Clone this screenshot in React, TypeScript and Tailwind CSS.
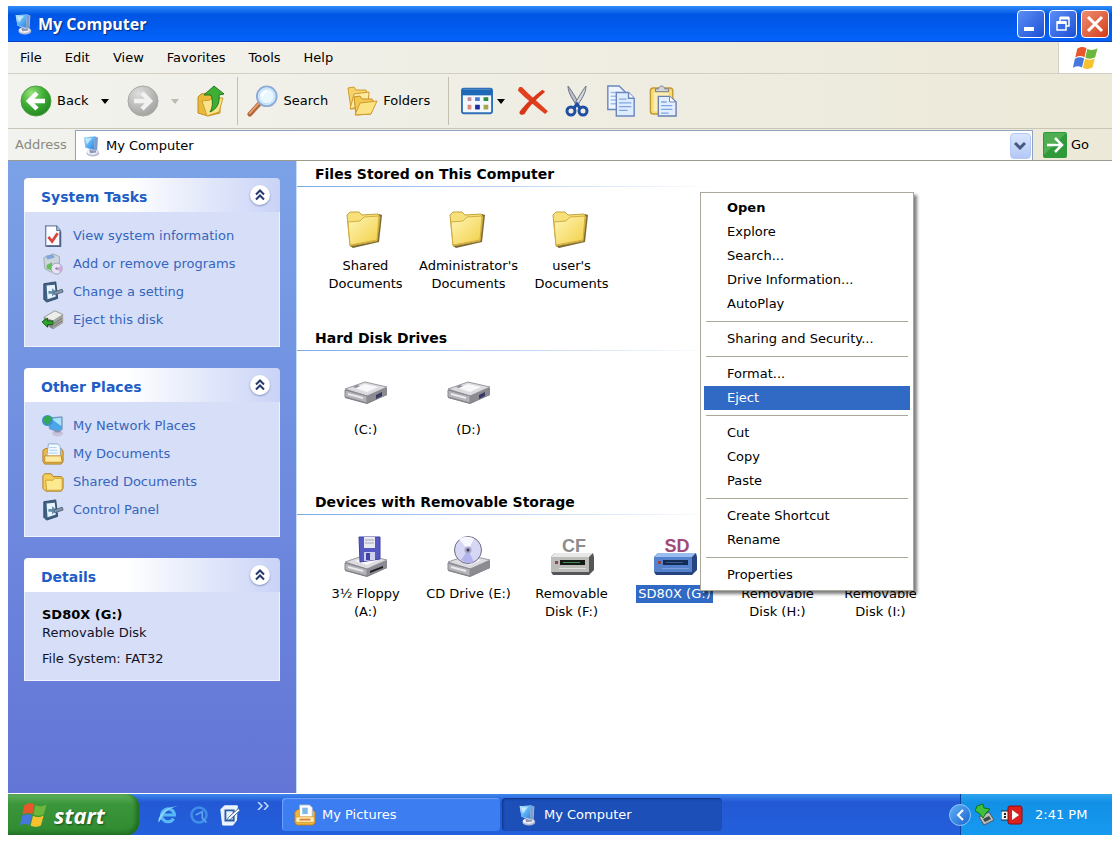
import React from "react";

const ComputerIcon: React.FC<{ className?: string }> = ({ className }) => (
  <svg viewBox="0 0 24 24" className={className} aria-hidden="true">
    <defs>
      <linearGradient id="screen" x1="0" y1="0" x2="1" y2="1">
        <stop offset="0" stopColor="#bfeaff" />
        <stop offset="0.5" stopColor="#5db4f4" />
        <stop offset="1" stopColor="#2c7fe0" />
      </linearGradient>
    </defs>
    <ellipse cx="14" cy="19.5" rx="7" ry="4" fill="#b9bcd0" />
    <ellipse cx="13.500" cy="18.500" rx="6" ry="3" fill="#edf0fa" />
    <path d="M10 15l7 1 1 3-7 1z" fill="#8f95b5" />
    <path d="M4 2.500L17 1.500 20 3 19 16.500 15 17.500 6 14z" fill="#cfd6ea" />
    <path d="M4 2.500L16.500 1.500 15 16 6 13.500z" fill="url(#screen)" />
    <path d="M16.500 1.500L19.500 3 18.500 16.500 15 17z" fill="#7f9cc9" />
    <path d="M6 4l7-.6-5.500 7z" fill="#e4f7ff" opacity="0.7" />
  </svg>
);

const WindowsFlag: React.FC<{ className?: string }> = ({ className }) => (
  <svg viewBox="0 0 28 26" className={className} aria-hidden="true">
    <path d="M4.500 3C8 .5 11.500.7 14.500 2.500l-2.200 9.700C9 10.400 6 10.500 2.400 12.500z" fill="#e8562a" />
    <path d="M15.500 3c3 1.800 7 1.800 11-.5l-2.600 9.800c-3.500 2-7.400 2-10.600.2z" fill="#6cb63b" />
    <path d="M2 13.700c3.300-2 6.700-2 10-.2l-2.400 9.700C6.500 21.500 3.500 21.500-.2 23.500z" fill="#4677dd" />
    <path d="M13 13.800c3.300 1.700 7 1.600 10.600-.3L21 23.300c-3.600 2.100-7.300 2-10.400.2z" fill="#f8c22e" />
  </svg>
);

const BackIcon = () => (
  <svg viewBox="0 0 32 32" className="size-8" aria-hidden="true">
    <defs>
      <radialGradient id="backBall" cx="0.35" cy="0.25" r="0.9">
        <stop offset="0" stopColor="#9be37c" />
        <stop offset="0.45" stopColor="#3fae35" />
        <stop offset="1" stopColor="#1c7a1c" />
      </radialGradient>
    </defs>
    <circle cx="16" cy="16" r="15" fill="url(#backBall)" stroke="#4f9f45" />
    <path d="M17 8l-8 8 8 8M10 16h15" fill="none" stroke="#fff" strokeWidth="4.500" />
  </svg>
);

const ForwardIcon = () => (
  <svg viewBox="0 0 32 32" className="size-8" aria-hidden="true">
    <defs>
      <radialGradient id="forwardBall" cx="0.35" cy="0.25" r="0.9">
        <stop offset="0" stopColor="#dedede" />
        <stop offset="0.6" stopColor="#b4b4b2" />
        <stop offset="1" stopColor="#9a9a98" />
      </radialGradient>
    </defs>
    <circle cx="16" cy="16" r="15" fill="url(#forwardBall)" stroke="#a8a8a5" />
    <path d="M15 8l8 8-8 8M22 16H7" fill="none" stroke="#f2f2f0" strokeWidth="4.500" />
  </svg>
);

const UpIcon = () => (
  <svg viewBox="0 0 28 32" className="h-8 w-7" aria-hidden="true">
    <path d="M1 12l3-3 6-1 2 2h8l3 3v15l-12 3-10-3z" fill="#e9b93c" stroke="#c08d1d" />
    <path d="M5 16l8-1 2-2h11l-4 14-12 4z" fill="#fbe38a" stroke="#cf9f2c" />
    <path d="M7 10L17 1l10 8-5 1c1 8-2 14-9 17 3-5 3-10 1-17z" fill="#3fae35" stroke="#1f7a1f" />
  </svg>
);

const SearchIcon = () => (
  <svg viewBox="0 0 34 34" className="size-8" aria-hidden="true">
    <path d="M3 31L13 20" stroke="#b0643a" strokeWidth="5" strokeLinecap="round" />
    <path d="M3 30L12 20" stroke="#e9a06a" strokeWidth="2" strokeLinecap="round" />
    <circle cx="21" cy="12" r="10.500" fill="#d5edfd" stroke="#8fa9d8" strokeWidth="2" />
    <circle cx="21" cy="12" r="8" fill="#e9f7ff" stroke="#b9dcf6" />
    <path d="M15 11c1-4 4-6 8-5-3 1-5 3-6 7z" fill="#fff" />
  </svg>
);

const FoldersIcon = () => (
  <svg viewBox="0 0 32 32" className="size-8" aria-hidden="true">
    <path d="M2 3l6-1 2 3h10l1 3v15l-16 1z" fill="#f7d467" stroke="#d09b30" />
    <path d="M4 24L8 9l15-2-1 12z" fill="#fdeb9f" stroke="#d09b30" />
    <path d="M8 12l6-1 2 3h10l2 3-3 12-15 1z" fill="#f3c851" stroke="#c98f27" />
    <path d="M9 30l5-12 17-2-6 13z" fill="#fbe283" stroke="#cf9a2d" />
  </svg>
);

const ViewsIcon = () => (
  <svg viewBox="0 0 34 28" className="h-7 w-8" aria-hidden="true">
    <rect x="1" y="1" width="32" height="26" rx="2" fill="#f3f8fe" stroke="#2f6fb5" strokeWidth="2" />
    <path d="M1 2h32v6H1z" fill="#1e68b8" />
    <path d="M7 10h4v4H7z" fill="#c58b97" />
    <path d="M15 10h5v4h-5z" fill="#4c78d0" />
    <path d="M24 10h5v4h-5z" fill="#2f8a35" />
    <path d="M7 18h4v5H7z" fill="#e08a76" />
    <path d="M15 18h5v5h-5z" fill="#1e2b9c" />
    <path d="M24 18h5v5h-5z" fill="#a9a44a" />
  </svg>
);

const DeleteIcon = () => (
  <svg viewBox="0 0 32 30" className="h-7 w-8" aria-hidden="true">
    <path d="M4 0c8 8 17 16 28 26l-3 3C19 21 9 13 0 4c0-3 2-5 4-4z" fill="#e2401c" />
    <path d="M26 3l3 2C21 12 12 20 7 29c-3 2-7 0-5-3C8 18 17 10 26 3z" fill="#d9361a" />
  </svg>
);

const CutIcon = () => (
  <svg viewBox="0 0 24 32" className="h-8 w-6" aria-hidden="true">
    <path d="M3 1c0 7 5 14 9 20l2-3C10 12 7 6 3 1z" fill="#b9bfc9" stroke="#6b7280" />
    <path d="M21 1c0 7-5 14-9 20l-2-3c4-6 7-12 11-17z" fill="#d5d9e0" stroke="#6b7280" />
    <ellipse cx="6" cy="26" rx="4" ry="4" fill="none" stroke="#1f4ea3" strokeWidth="3" />
    <ellipse cx="18" cy="26" rx="4" ry="4" fill="none" stroke="#1f4ea3" strokeWidth="3" />
    <path d="M9 23l3-4 3 4" fill="none" stroke="#1f4ea3" strokeWidth="3" />
  </svg>
);

const CopyIcon = () => (
  <svg viewBox="0 0 32 34" className="size-8" aria-hidden="true">
    <path d="M2 1h12l6 6v19H2z" fill="#eef5ff" stroke="#6b86bd" strokeWidth="1.500" />
    <path d="M5 8h9M5 12h9M5 16h9M5 20h6" stroke="#9dbcec" strokeWidth="1.500" />
    <path d="M11 8h13l6 6v19H11z" fill="#dfecff" stroke="#6b86bd" strokeWidth="1.500" />
    <path d="M24 8v6h6" fill="#fff" stroke="#6b86bd" strokeWidth="1.500" />
    <path d="M14 15h8M14 19h13M14 23h13M14 27h9" stroke="#7ea5e3" strokeWidth="1.500" />
  </svg>
);

const PasteIcon = () => (
  <svg viewBox="0 0 30 34" className="h-8 w-7" aria-hidden="true">
    <rect x="1.500" y="3" width="24" height="28" rx="3" fill="#f7dc78" stroke="#c29a34" strokeWidth="1.500" />
    <path d="M5 8h16v20H5z" fill="#fbeeb4" />
    <path d="M7 7V4h3c1-4 6-4 7 0h4v3z" fill="#d3d6dc" stroke="#75797f" />
    <path d="M10 12h12l7 6v15H10z" fill="#e3eeff" stroke="#6b7fae" strokeWidth="1.500" />
    <path d="M22 12v6h6" fill="#fff" stroke="#6b7fae" />
    <path d="M13 18h6M13 22h12M13 26h12M13 30h8" stroke="#7ea5e3" strokeWidth="1.500" />
  </svg>
);

const Caret: React.FC<{ dim?: boolean }> = ({ dim }) => (
  <svg viewBox="0 0 8 5" className="h-[5px] w-2" aria-hidden="true">
    <path d="M0 0h8L4 5z" fill={dim ? "#bdbbae" : "#000"} />
  </svg>
);

const InfoIcon = () => (
  <svg viewBox="0 0 24 24" className="size-[22px]" aria-hidden="true">
    <path d="M4 1h12l4 5v17H4z" fill="#fbfcff" stroke="#7384a6" strokeWidth="1.500" />
    <path d="M20 7v16H5" fill="none" stroke="#4f6184" strokeWidth="2" />
    <path d="M16 1v5h4" fill="#9fc0ea" stroke="#53688f" />
    <path d="M7 13l4 5 6-9" fill="none" stroke="#d8453b" strokeWidth="3" />
  </svg>
);

const ProgramsIcon = () => (
  <svg viewBox="0 0 24 24" className="size-[22px]" aria-hidden="true">
    <path d="M2 5l10-4 7 3v11l-9 6-7-4z" fill="#cdd6dc" stroke="#9aa7b4" />
    <path d="M4 3l8-1 2 3-8 2z" fill="#7fa6dd" />
    <path d="M5 13l6-3v9l-6-2z" fill="#63bf57" />
    <circle cx="16" cy="17" r="6" fill="#e9e3f6" stroke="#989fb4" />
    <path d="M16 17l5-3a6 6 0 0 1-1 7z" fill="#cfa9da" />
    <circle cx="16" cy="17" r="1.500" fill="#8f93a8" />
  </svg>
);

const SettingIcon = () => (
  <svg viewBox="0 0 24 24" className="size-[22px]" aria-hidden="true">
    <path d="M2 3l13-2 2 18-12 4-3-3z" fill="#3f6184" stroke="#2c4663" />
    <path d="M5 5l9-1 1 13-9 3z" fill="#e7f4fb" />
    <path d="M7 11h4V8l5 4-5 5v-3H7z" fill="#5f8cad" />
    <path d="M13 12l9-3 1 3-9 3z" fill="#8597ab" stroke="#51647b" />
  </svg>
);

const EjectIcon = () => (
  <svg viewBox="0 0 24 24" className="size-[22px]" aria-hidden="true">
    <path d="M2 9l12-7 9 4v9l-11 7-10-6z" fill="#85898a" />
    <path d="M2 9l12-7 9 4-11 7z" fill="#ecece8" stroke="#9b9d9b" />
    <path d="M12 13l11-7v9l-11 7z" fill="#a5a6a1" />
    <path d="M13 16l9-6M13 19l9-6" stroke="#6f716d" />
    <path d="M0 14l6-4v3h6v4H6v3z" fill="#2fa32b" stroke="#155a17" />
  </svg>
);

const NetworkIcon = () => (
  <svg viewBox="0 0 24 24" className="size-[22px]" aria-hidden="true">
    <ellipse cx="17" cy="20" rx="6" ry="3.500" fill="#c9c2dc" />
    <path d="M7 3l15-1v14l-6 2-8-3z" fill="#4aa6e8" stroke="#8295b8" />
    <path d="M10 4l11-1v9z" fill="#a8e2fb" />
    <circle cx="6" cy="6" r="6" fill="#3f8fd8" />
    <path d="M2 3c3-3 6-3 9 0 0 3-1 4-3 4l-1 4c-3 0-6-4-5-8z" fill="#34a853" />
    <path d="M14 17h6v2h-6z" fill="#8b8fae" />
  </svg>
);

const DocumentsIcon = () => (
  <svg viewBox="0 0 24 24" className="size-[22px]" aria-hidden="true">
    <path d="M1 8l3-2h17l2 3v11l-2 3H3l-2-3z" fill="#edb944" stroke="#a87a26" />
    <path d="M7 1h10l3 3v13H5z" fill="#f4faff" stroke="#88a6c9" />
    <path d="M8 5h8M8 8h9M7 11h10" stroke="#a5c9ea" />
    <path d="M3 14h18l1 7H3z" fill="#fde9a0" stroke="#b98a2b" />
  </svg>
);

const SmallFolderIcon = () => (
  <svg viewBox="0 0 24 24" className="size-[22px]" aria-hidden="true">
    <path d="M1 5l2-2h7l2 3h9l2 2v11l-2 3H4l-3-3z" fill="#f5cf55" stroke="#a87a26" />
    <path d="M4 10h8l2-2h8v11l-1 2H5z" fill="#fdea90" stroke="#c99b35" />
  </svg>
);

const FolderIcon = () => (
  <svg viewBox="0 0 44 44" className="size-11" aria-hidden="true">
    <defs>
      <linearGradient id="folderFace" x1="0" y1="0" x2="1" y2="1">
        <stop offset="0" stopColor="#fff6b8" />
        <stop offset="1" stopColor="#f2cf45" />
      </linearGradient>
    </defs>
    <path d="M6 39l3 2 26-6 3-27-3-1z" fill="#7a6a34" />
    <path d="M3 8l3-3h9l3 3 16-1 2 3-3 24L6 39z" fill="#f7e07a" stroke="#c5a23c" />
    <path d="M4 15l12-1 4-4 15-1-2 24L6 38z" fill="url(#folderFace)" stroke="#d3ae3f" />
  </svg>
);

// The grey box shared by the hard disk, floppy and CD icons.
const DriveBox = () => (
  <>
    <path d="M1 28l19-7 23 5v7l-20 9L1 36z" fill="#77777c" />
    <path d="M1 27l20-7 22 5-20 9z" fill="#dcdce0" stroke="#9a9aa0" />
    <path d="M11 26l10-4 13 3-11 5z" fill="#f8f8fa" />
    <path d="M1 28l22 6v7L1 35z" fill="#b4b4b9" stroke="#87878d" />
    <path d="M4 31l15 4v2L4 33z" fill="#ececef" />
    <path d="M23 34l20-8v7l-20 8z" fill="#8b8b91" />
  </>
);

const HardDiskIcon = () => (
  <svg viewBox="0 9 44 44" className="size-11" aria-hidden="true">
    <DriveBox />
    <path d="M32 33l6-3v4l-6 3z" fill="#383a66" />
    <path d="M9 25l4-2 3 1-4 2z" fill="#8b8d98" />
  </svg>
);

const FloppyIcon = () => (
  <svg viewBox="0 0 44 44" className="size-11" aria-hidden="true">
    <DriveBox />
    <path d="M26 36l13-5v2l-13 5z" fill="#1d1d22" />
    <path d="M15 2h21v22l-20 3z" fill="#5659c4" stroke="#3f409a" />
    <path d="M20 2h11v11H20z" fill="#e9e9f2" />
    <path d="M21 5h9M21 8h9" stroke="#a5a5c0" />
    <path d="M20 17h11v8l-11 1z" fill="#cfd0ec" />
    <path d="M22 18h4v7h-4z" fill="#4144a3" />
  </svg>
);

const CdIcon = () => (
  <svg viewBox="0 0 44 44" className="size-11" aria-hidden="true">
    <DriveBox />
    <circle cx="21" cy="15" r="13.500" fill="#d6d6f5" stroke="#6e6e80" />
    <path d="M21 15L12 4c5-3 11-3 15 0z" fill="#f7f7ff" />
    <path d="M21 15l6 12c-4 2-9 1-13-2z" fill="#b3b4ee" />
    <circle cx="21" cy="15" r="3.500" fill="#a9a6c9" />
    <circle cx="21" cy="15" r="1.500" fill="#4c3558" />
  </svg>
);

const CardReaderIcon: React.FC<{ card?: string; selected?: boolean }> = ({ card, selected }) => (
  <svg viewBox="0 0 44 44" className="size-11" aria-hidden="true">
    {card && (
      <text
        x="24"
        y="17"
        textAnchor="middle"
        fontFamily="Liberation Sans, sans-serif"
        fontSize="18"
        fontWeight="700"
        fill={selected ? "#a04a78" : "#8d8d8d"}
      >
        {card}
      </text>
    )}
    <path d="M1 22l4-4h38l1 4v13l-5 5H3l-2-3z" fill={selected ? "#26457f" : "#55565a"} />
    <path d="M1 22l4-4h38l-4 4z" fill={selected ? "#9abcf0" : "#e8e8e8"} />
    <path d="M1 22h38v15H1z" fill={selected ? "#5682cd" : "#bcbcb8"} />
    <path d="M10 25h25v5H10z" fill={selected ? "#142b55" : "#151a17"} />
    <path d="M13 27h17v1H13z" fill={selected ? "#2f5f8a" : "#3d8a55"} />
    <path d="M5 26h3v3H5z" fill="#93434b" />
    <path d="M9 33h27v1H9z" fill={selected ? "#7ba0de" : "#e2e2de"} />
  </svg>
);

const PicturesIcon = () => (
  <svg viewBox="0 0 24 24" className="size-[22px]" aria-hidden="true">
    <path d="M1 9l3-3h16l3 3v11l-2 3H3l-2-3z" fill="#f0b541" stroke="#b67a1c" />
    <path d="M6 1h11l3 3v12H6z" fill="#fff" stroke="#9bb3cf" />
    <path d="M9 4h6v7H9z" fill="#7dbbe6" />
    <path d="M2 14h20v6H2z" fill="#fff1bb" stroke="#d99b2e" />
    <path d="M6 16h12v2H6z" fill="#db7c3b" />
  </svg>
);

const ExplorerIcon = () => (
  <svg viewBox="0 0 24 24" className="size-[22px]" aria-hidden="true">
    <path d="M18 16a7 7 0 1 1 1-4H6" fill="none" stroke="#56b9f5" strokeWidth="3.500" />
    <path d="M2 20C-1 15 11 1 22 3c-4-1-15 5-18 14z" fill="#8fd4fb" />
  </svg>
);

const QuickTimeIcon = () => (
  <svg viewBox="0 0 24 24" className="size-5" aria-hidden="true">
    <circle cx="12" cy="12" r="9" fill="none" stroke="#3f8fe8" strokeWidth="3" />
    <path d="M8 12l8-4v8l5 5" fill="none" stroke="#5aa4f0" strokeWidth="2" />
  </svg>
);

const DesktopIcon = () => (
  <svg viewBox="0 0 24 24" className="size-[22px]" aria-hidden="true">
    <path d="M2 6l4-4h14l-1 16-4 5H4z" fill="#e9f2fb" stroke="#fff" />
    <path d="M7 7h9v11H7z" fill="none" stroke="#2a5ca8" strokeWidth="2" />
    <path d="M10 15L21 5l2 2-11 10-3 1z" fill="#fff" stroke="#315a94" />
  </svg>
);

const menus = ["File", "Edit", "View", "Favorites", "Tools", "Help"];

const systemTasks = [
  { label: "View system information", icon: <InfoIcon /> },
  { label: "Add or remove programs", icon: <ProgramsIcon /> },
  { label: "Change a setting", icon: <SettingIcon /> },
  { label: "Eject this disk", icon: <EjectIcon /> },
];

const otherPlaces = [
  { label: "My Network Places", icon: <NetworkIcon /> },
  { label: "My Documents", icon: <DocumentsIcon /> },
  { label: "Shared Documents", icon: <SmallFolderIcon /> },
  { label: "Control Panel", icon: <SettingIcon /> },
];

interface Item {
  lines: string[];
  icon: React.ReactNode;
  selected?: boolean;
}

const sections: { title: string; items: Item[] }[] = [
  {
    title: "Files Stored on This Computer",
    items: [
      { lines: ["Shared", "Documents"], icon: <FolderIcon /> },
      { lines: ["Administrator's", "Documents"], icon: <FolderIcon /> },
      { lines: ["user's", "Documents"], icon: <FolderIcon /> },
    ],
  },
  {
    title: "Hard Disk Drives",
    items: [
      { lines: ["(C:)"], icon: <HardDiskIcon /> },
      { lines: ["(D:)"], icon: <HardDiskIcon /> },
    ],
  },
  {
    title: "Devices with Removable Storage",
    items: [
      { lines: ["3½ Floppy", "(A:)"], icon: <FloppyIcon /> },
      { lines: ["CD Drive (E:)"], icon: <CdIcon /> },
      { lines: ["Removable", "Disk (F:)"], icon: <CardReaderIcon card="CF" /> },
      { lines: ["SD80X (G:)"], icon: <CardReaderIcon card="SD" selected />, selected: true },
      { lines: ["Removable", "Disk (H:)"], icon: <CardReaderIcon /> },
      { lines: ["Removable", "Disk (I:)"], icon: <CardReaderIcon /> },
    ],
  },
];

const contextMenu = [
  ["Open", "Explore", "Search...", "Drive Information...", "AutoPlay"],
  ["Sharing and Security..."],
  ["Format...", "Eject"],
  ["Cut", "Copy", "Paste"],
  ["Create Shortcut", "Rename"],
  ["Properties"],
];

const TitleBar = () => (
  <header className="flex h-9 shrink-0 items-center gap-1 border-b border-[#0a3fc0] bg-linear-to-b from-[#2f8bf8] via-[#0054e3] via-25% to-[#0463fb] pr-[3px] pl-1">
    <ComputerIcon className="size-[22px]" />
    <h1 className="flex-1 font-['Open_Sans',sans-serif] text-base font-bold text-white [text-shadow:1px_1px_1px_#0a2a80]">
      My Computer
    </h1>
    <div className="flex gap-1">
      <button
        aria-label="Minimize"
        className="flex size-7 items-end rounded-sm border border-white bg-linear-to-br from-[#5c8df5] to-[#1c4fd6] p-1.5"
      >
        <span className="h-1 w-2.5 bg-white" />
      </button>
      <button
        aria-label="Restore"
        className="flex size-7 items-center justify-center rounded-sm border border-white bg-linear-to-br from-[#5c8df5] to-[#1c4fd6]"
      >
        <svg viewBox="0 0 16 16" className="size-4" aria-hidden="true">
          <path d="M5 5V2h9v8h-3" fill="none" stroke="#fff" strokeWidth="1.500" />
          <path d="M5 2h9" stroke="#fff" strokeWidth="3" />
          <path d="M2 6h9v8H2z" fill="none" stroke="#fff" strokeWidth="1.500" />
          <path d="M2 6.500h9" stroke="#fff" strokeWidth="3" />
        </svg>
      </button>
      <button
        aria-label="Close"
        className="flex size-7 items-center justify-center rounded-sm border border-white bg-linear-to-br from-[#ee8c70] to-[#d23a14]"
      >
        <svg viewBox="0 0 18 18" className="size-[18px]" aria-hidden="true">
          <path d="M2 2l14 14M16 2L2 16" stroke="#fff" strokeWidth="3" />
        </svg>
      </button>
    </div>
  </header>
);

const Toolbar = () => (
  <div className="flex h-[55px] shrink-0 items-center border-b border-[#c9c6b8] pl-3">
    <button className="flex items-center gap-[5px]">
      <BackIcon />
      Back
    </button>
    <button aria-label="Back history" className="ml-3">
      <Caret />
    </button>
    <button aria-label="Forward" className="ml-[18px]">
      <ForwardIcon />
    </button>
    <button aria-label="Forward history" className="ml-3">
      <Caret dim />
    </button>
    <button aria-label="Up" className="ml-[18px]">
      <UpIcon />
    </button>
    <div className="ml-3 h-12 w-px bg-[#c3c0b2]" />
    <button className="ml-[9px] flex items-center gap-[5px]">
      <SearchIcon />
      Search
    </button>
    <button className="ml-[18px] flex items-center gap-[5px]">
      <FoldersIcon />
      Folders
    </button>
    <div className="ml-[18px] h-12 w-px bg-[#c3c0b2]" />
    <button aria-label="Views" className="ml-3 flex items-center gap-1">
      <ViewsIcon />
      <Caret />
    </button>
    <button aria-label="Delete" className="ml-3">
      <DeleteIcon />
    </button>
    <button aria-label="Cut" className="ml-4">
      <CutIcon />
    </button>
    <button aria-label="Copy" className="ml-4">
      <CopyIcon />
    </button>
    <button aria-label="Paste" className="ml-3">
      <PasteIcon />
    </button>
  </div>
);

const AddressBar = () => (
  <div className="flex h-8 shrink-0 items-end border-b border-[#9c9a8c] pl-[7px]">
    <label htmlFor="address" className="w-[60px] self-center text-[#8b8a80]">
      Address
    </label>
    <div className="flex h-[30px] flex-1 items-center border border-b-0 border-[#8ea3bf] bg-white pr-px pl-1">
      <ComputerIcon className="size-[22px]" />
      <input id="address" defaultValue="My Computer" className="ml-1 min-w-0 flex-1 outline-none" />
      <button
        aria-label="Show address list"
        className="flex h-[26px] w-[21px] items-center justify-center rounded-sm border border-[#b5c8f5] bg-linear-to-b from-[#dbe6fe] to-[#b4c8f6]"
      >
        <svg viewBox="0 0 12 8" className="h-2 w-3" aria-hidden="true">
          <path d="M1 1l5 5 5-5" fill="none" stroke="#45597f" strokeWidth="3" />
        </svg>
      </button>
    </div>
    <button className="mr-[23px] ml-2.5 flex items-center gap-1 self-center">
      <svg viewBox="0 0 24 26" className="h-[26px] w-6" aria-hidden="true">
        <rect width="24" height="26" rx="2" fill="#2f9a3a" />
        <path d="M1 1h22L1 23z" fill="#66bd60" opacity="0.6" />
        <path d="M4 13h15M12 6l7 7-7 7" fill="none" stroke="#fff" strokeWidth="2.500" />
      </svg>
      Go
    </button>
  </div>
);

const Panel: React.FC<{ title: string; children: React.ReactNode }> = ({ title, children }) => (
  <section>
    <div className="flex h-[34px] items-center justify-between rounded-t bg-linear-to-r from-white from-40% to-[#c9d3f6] pr-2.5 pl-[17px]">
      <h2 className="pt-1 text-sm font-bold text-[#215dc6]">{title}</h2>
      <button
        aria-label={`Collapse ${title}`}
        className="flex size-5 items-center justify-center rounded-full bg-white shadow-[0_1px_2px_#7f8fc0]"
      >
        <svg viewBox="0 0 10 12" className="h-3 w-2.5" aria-hidden="true">
          <path d="M1 5.500l4-4 4 4M1 10.500l4-4 4 4" fill="none" stroke="#25396f" strokeWidth="2" />
        </svg>
      </button>
    </div>
    <div className="border border-t-0 border-[#f0f3ff] bg-[#d6dff7] px-[17px] pt-2.5 pb-3">{children}</div>
  </section>
);

const LinkList: React.FC<{ items: { label: string; icon: React.ReactNode }[] }> = ({ items }) => (
  <ul>
    {items.map((item) => (
      <li key={item.label}>
        <a href="#" className="flex h-7 items-center gap-[9px] text-[#3565bd]">
          {item.icon}
          {item.label}
        </a>
      </li>
    ))}
  </ul>
);

const Sidebar = () => (
  <aside className="flex w-[289px] shrink-0 flex-col gap-[21px] border-r border-[#c5dcfb] bg-linear-to-b from-[#7ba2e7] to-[#6375d6] px-4 pt-[17px]">
    <Panel title="System Tasks">
      <LinkList items={systemTasks} />
    </Panel>
    <Panel title="Other Places">
      <LinkList items={otherPlaces} />
    </Panel>
    <Panel title="Details">
      <div className="pt-1 leading-[18px] text-[#10122b]">
        <p className="font-bold text-black">SD80X (G:)</p>
        <p>Removable Disk</p>
        <p className="pt-2">File System: FAT32</p>
      </div>
    </Panel>
  </aside>
);

const ContextMenu = () => (
  <div
    role="menu"
    className="absolute top-[31px] left-[403px] w-[214px] border border-[#aca899] bg-white p-[3px] shadow-[3px_3px_3px_#00000080]"
  >
    {contextMenu.map((group, index) => (
      <div key={group[0]}>
        {index > 0 && <div role="separator" className="mx-0.5 my-[5px] h-px bg-[#aca899]" />}
        {group.map((label) => (
          <button
            key={label}
            role="menuitem"
            className={`block h-6 w-full pl-[23px] text-left ${label === "Eject" ? "bg-[#316ac5] text-white" : ""} ${
              label === "Open" ? "font-bold" : ""
            }`}
          >
            {label}
          </button>
        ))}
      </div>
    ))}
  </div>
);

const FilePane = () => (
  <main className="relative min-w-0 flex-1 bg-white">
    {sections.map((section) => (
      <section key={section.title}>
        <h2 className="flex h-[25px] items-center pl-[18px] text-sm font-bold">{section.title}</h2>
        <div className="h-px w-[420px] bg-linear-to-r from-[#7da8e8] to-white" />
        <div className="flex h-[138px] pt-5 pl-[17px]">
          {section.items.map((item) => (
            <button key={item.lines.join(" ")} className="flex w-[103px] flex-col items-center gap-1.5">
              {item.icon}
              <span
                className={`px-0.5 leading-[18px] whitespace-nowrap ${item.selected ? "bg-[#316ac5] text-white" : ""}`}
              >
                {item.lines.map((line) => (
                  <span key={line} className="block">
                    {line}
                  </span>
                ))}
              </span>
            </button>
          ))}
        </div>
      </section>
    ))}
    <ContextMenu />
  </main>
);

const Taskbar = () => (
  <footer className="flex h-[41px] shrink-0 items-stretch bg-linear-to-b from-[#3f86ee] via-[#2358d4] via-20% to-[#2460dc] text-white">
    <button className="flex w-[131px] items-center gap-1.5 rounded-r-xl bg-linear-to-b from-[#5fae5c] via-[#3b963b] via-25% to-[#2f8a30] pl-3 shadow-[inset_-3px_-2px_4px_#1f6a22]">
      <WindowsFlag className="h-[26px] w-7" />
      <span className="font-['Open_Sans',sans-serif] text-[22px] leading-7 font-bold italic [text-shadow:1px_1px_2px_#1b4a1b]">
        start
      </span>
    </button>
    <div className="flex w-[143px] items-center gap-2.5 pl-[18px]">
      <button aria-label="Internet Explorer">
        <ExplorerIcon />
      </button>
      <button aria-label="QuickTime">
        <QuickTimeIcon />
      </button>
      <button aria-label="Show Desktop">
        <DesktopIcon />
      </button>
      <button aria-label="More" className="ml-1.5 self-start pt-2">
        <svg viewBox="0 0 12 8" className="h-2 w-3" aria-hidden="true">
          <path d="M1 0l4 4-4 4M7 0l4 4-4 4" fill="none" stroke="#c8dcff" strokeWidth="1.500" />
        </svg>
      </button>
    </div>
    <div className="flex flex-1 items-center gap-0.5">
      <button className="flex h-[33px] w-[218px] items-center gap-1.5 rounded-sm bg-[#3c7df2] pl-3 shadow-[inset_1px_1px_1px_#6ea2ff]">
        <PicturesIcon />
        My Pictures
      </button>
      <button className="flex h-[33px] w-[220px] items-center gap-1.5 rounded-sm bg-[#1c4fb8] pl-3.5 shadow-[inset_1px_1px_2px_#0f3484]">
        <ComputerIcon className="size-[22px]" />
        My Computer
      </button>
    </div>
    <div className="flex w-[152px] items-center border-l border-[#0b3f9c] bg-linear-to-b from-[#2fa4f0] via-[#1290e6] via-20% to-[#159af0]">
      <button
        aria-label="Show hidden icons"
        className="-ml-3 flex size-[22px] items-center justify-center rounded-full border border-[#8fc6fb] bg-linear-to-br from-[#62b1f7] to-[#1a63cf]"
      >
        <svg viewBox="0 0 8 12" className="h-3 w-2" aria-hidden="true">
          <path d="M7 1L2 6l5 5" fill="none" stroke="#fff" strokeWidth="2" />
        </svg>
      </button>
      <svg viewBox="0 0 20 24" className="ml-1 h-6 w-5" aria-hidden="true">
        <path d="M4 14l10-5 5 8-10 5z" fill="#b9bcc0" stroke="#55585c" />
        <path d="M8 16l6-3 2 3-6 3z" fill="#3d4a44" />
        <path d="M2 3l6-2 1 4 6 1-4 4-3 5-4-5-4-2z" fill="#3ec03a" stroke="#14701c" />
      </svg>
      <svg viewBox="0 0 22 20" className="ml-1.5 h-5 w-[22px]" aria-hidden="true">
        <path d="M0 6h8v9H0z" fill="#f2f2f2" stroke="#2b2b2b" />
        <path d="M3 8h2v2H3zM3 11h2v2H3z" fill="#222" />
        <rect x="7" y="1" width="14" height="18" rx="2" fill="#dc1f1f" stroke="#8c0c10" />
        <path d="M11 5l7 5-7 5z" fill="#fff" />
      </svg>
      <span className="ml-3">2:41 PM</span>
    </div>
  </footer>
);

export default function App() {
  return (
    <div className="flex min-h-screen flex-col bg-white pt-1.5 pr-1.5 pb-2 pl-2 font-['DejaVu_Sans',sans-serif] text-[13px] text-black">
      <TitleBar />
      <div className="flex shrink-0 flex-col bg-linear-to-r from-[#f2f2ee] to-[#ece9d8]">
        <nav className="flex h-8 items-stretch border-b border-[#d3d0c3]">
          <ul className="flex flex-1 items-center gap-[23px] pl-3">
            {menus.map((menu) => (
              <li key={menu}>
                <button>{menu}</button>
              </li>
            ))}
          </ul>
          <div className="flex w-[54px] items-center justify-center border-l border-[#d3d0c3] bg-white">
            <WindowsFlag className="h-6 w-[26px]" />
          </div>
        </nav>
        <Toolbar />
        <AddressBar />
      </div>
      <div className="flex flex-1 pb-px">
        <Sidebar />
        <FilePane />
      </div>
      <Taskbar />
    </div>
  );
}
